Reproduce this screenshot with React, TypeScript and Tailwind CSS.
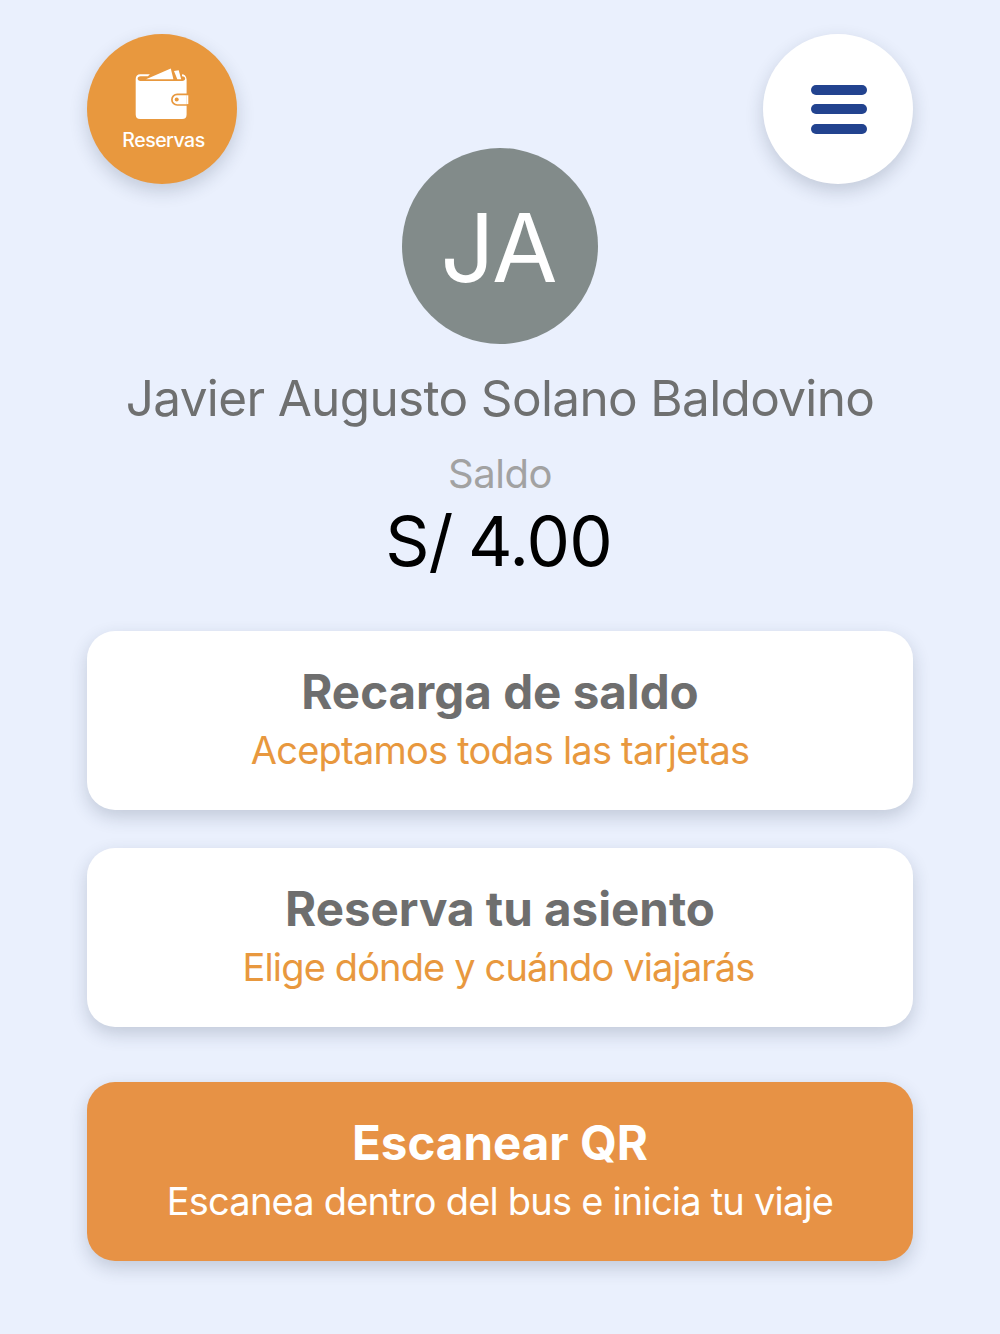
import type { ReactNode } from 'react'

const acciones = [
  {
    titulo: 'Recarga de saldo',
    detalle: 'Aceptamos todas las tarjetas',
    card: 'bg-white',
    tituloClass: 'text-[#6e6e6e]',
    detalleClass: 'text-[#e8983e] tracking-[-0.76px]',
  },
  {
    titulo: 'Reserva tu asiento',
    detalle: 'Elige dónde y cuándo viajarás',
    card: 'bg-white mt-[38px]',
    tituloClass: 'text-[#6e6e6e]',
    detalleClass: 'text-[#e8983e] tracking-[-0.86px] pr-[3px]',
  },
  {
    titulo: 'Escanear QR',
    detalle: 'Escanea dentro del bus e inicia tu viaje',
    card: 'bg-[#e79245] mt-[55px]',
    tituloClass: 'text-white',
    detalleClass: 'text-white tracking-[-0.79px]',
  },
]

function WalletIcon() {
  return (
    <svg width="54" height="52" viewBox="0 0 54 52" fill="none">
      {/* body and rim */}
      <path d="M0.7 11c0-3 1.8-4.8 4.6-4.8H46.500c3 0 4.800 1.600 5.100 5.300V46.500c0 3-1.500 4.500-4.500 4.500H5.200c-3 0-4.500-1.500-4.500-4.500z" fill="#fff" />
      {/* opening */}
      <path d="M15 6H47v2.200c2.200 0 3.200.9 3.200 2.400s-1.200 2.400-3 2.400H5.600c-1.900 0-3-.9-3-2.400s1.100-2.400 3-2.400H13z" fill="#e8983e" />
      {/* bills */}
      <path d="M11 11.300L35.800 0.500 38.400 11.300z" fill="#fff" />
      <path d="M39 3l4.700-.8 2.500 9.100h-3.900z" fill="#fff" />
      {/* clasp */}
      <path d="M54 26.400H42.200a5.300 5.300 0 0 0 0 10.600H54" stroke="#e8983e" strokeWidth="1.700" />
      <path d="M51.500 27.300h1.800v8.800h-1.800z" fill="#fff" />
      <circle cx="41.700" cy="31.500" r="2" fill="#e8983e" />
    </svg>
  )
}

function RoundButton({ className, children }: { className: string; children: ReactNode }) {
  return (
    <button className={`flex h-[150px] w-[150px] flex-col items-center rounded-full shadow-[0_7px_18px_rgba(35,50,75,0.2)] ${className}`}>
      {children}
    </button>
  )
}

export default function App() {
  return (
    <div className="flex h-[1334px] w-[1000px] flex-col overflow-hidden bg-[#eaf0fd] px-[87px] pt-[34px] text-center font-['Inter',sans-serif] whitespace-nowrap">
      <header className="flex justify-between">
        <RoundButton className="bg-[#e8983e] pt-[34px]">
          <WalletIcon />
          <span className="mt-[8px] ml-[3px] text-[19.500px] leading-6 font-medium tracking-[-0.5px] text-white">Reservas</span>
        </RoundButton>
        <RoundButton className="justify-center gap-[9.500px] bg-white">
          <span className="ml-[2px] h-[10px] w-14 rounded-full bg-[#22438f]" />
          <span className="ml-[2px] h-[10px] w-14 rounded-full bg-[#22438f]" />
          <span className="ml-[2px] h-[10px] w-14 rounded-full bg-[#22438f]" />
        </RoundButton>
      </header>

      <section className="-mt-9 flex flex-col items-center">
        <div className="flex h-[196px] w-[196px] items-center justify-center rounded-full bg-[#828b8a]">
          <span className="pt-1 pr-[3px] text-[95px] leading-[192px] tracking-[-1px] text-white">JA</span>
        </div>
        <h1 className="mt-6 text-[49.500px] leading-[60px] tracking-[-0.66px] text-[#6f7070]">Javier Augusto Solano Baldovino</h1>
        <p className="mt-[21px] text-[40px] leading-[50px] tracking-[-0.5px] text-[#a2a2a2]">Saldo</p>
        <p className="pr-[3px] text-[69px] leading-[84px] tracking-[-0.9px] [word-spacing:-3px] text-black">S/ 4.00</p>
      </section>

      <main className="mt-12 flex flex-col">
        {acciones.map((item) => (
          <button
            key={item.titulo}
            className={`flex h-[179px] flex-col items-center rounded-[28px] pt-[30px] shadow-[0_7px_18px_rgba(35,50,75,0.2)] ${item.card}`}
          >
            <span className={`text-[47.500px] leading-[61px] font-bold ${item.tituloClass}`}>{item.titulo}</span>
            <span className={`text-[38px] leading-[57px] ${item.detalleClass}`}>{item.detalle}</span>
          </button>
        ))}
      </main>
    </div>
  )
}
